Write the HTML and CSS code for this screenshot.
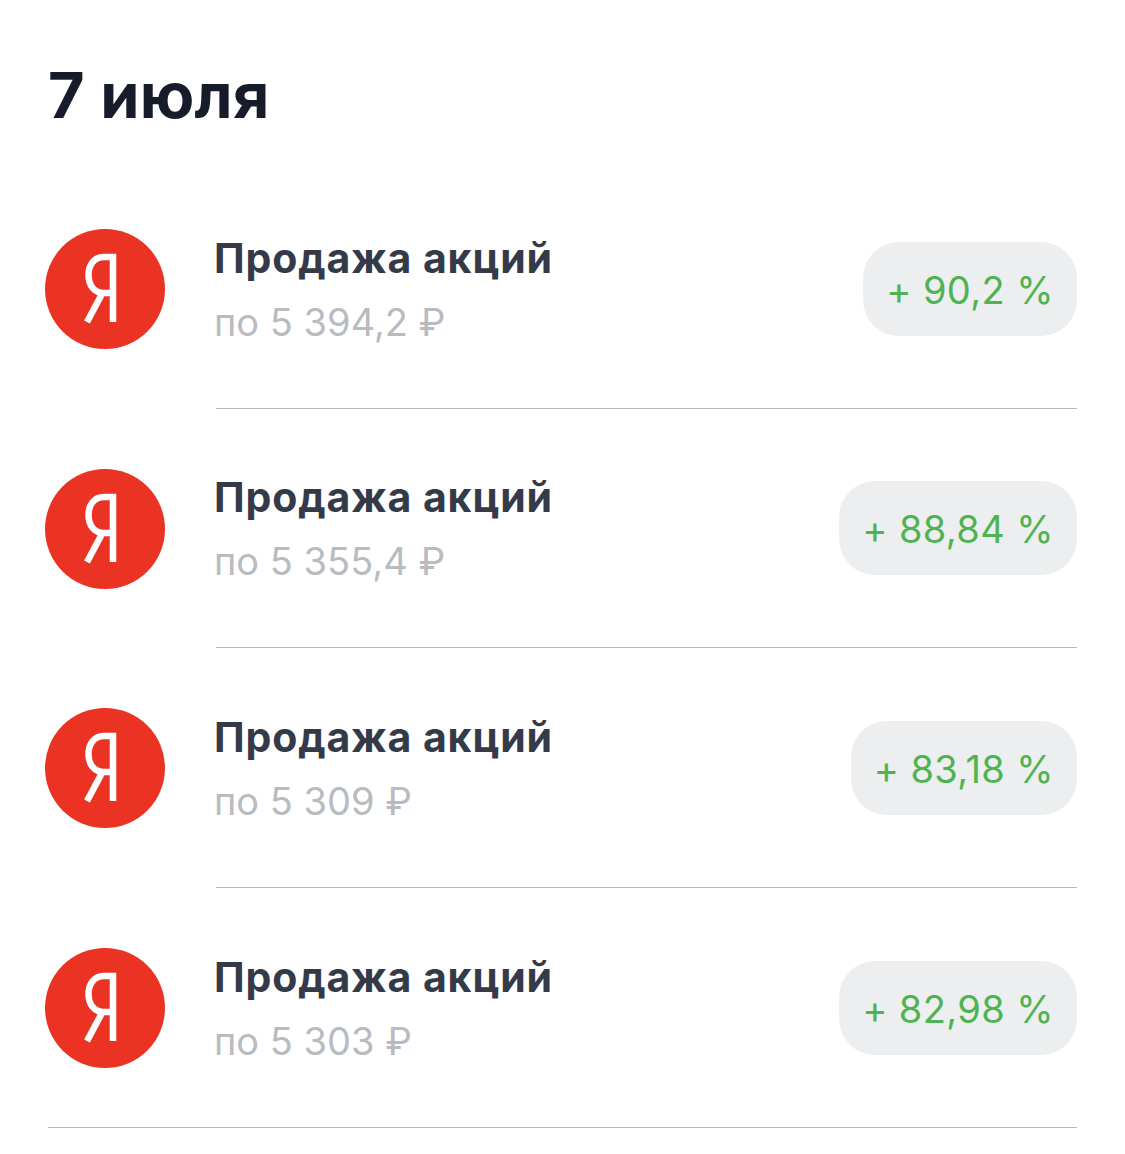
FILE: index.html
```html
<!DOCTYPE html>
<html lang="ru">
<head>
    <meta charset="UTF-8">
    <meta name="viewport" content="width=device-width, initial-scale=1.0">
    <title>7 июля</title>
    <link rel="stylesheet" href="styles.css">
</head>
<body>
    <div class="main-content">
        <h1 class="day-title">7 июля</h1>

        <div class="deals">
            <div class="deal">
                <svg class="logo" viewBox="0 0 120 120" role="img" aria-label="Яндекс">
                    <circle cx="60" cy="60" r="60" fill="#ea3323"/>
                    <path d="M68 93V28H59C49 28 43.5 36 43.5 46C43.5 56 49 64 59 64H68M58 63L42 93" fill="none" stroke="#fff" stroke-width="6.5"/>
                </svg>
                <div class="deal-body">
                    <div class="deal-text">
                        <div class="deal-name">Продажа акций</div>
                        <div class="deal-price">по 5 394,2 ₽</div>
                    </div>
                    <div class="badge">+ 90,2 %</div>
                </div>
            </div>

            <div class="deal">
                <svg class="logo" viewBox="0 0 120 120" role="img" aria-label="Яндекс">
                    <circle cx="60" cy="60" r="60" fill="#ea3323"/>
                    <path d="M68 93V28H59C49 28 43.5 36 43.5 46C43.5 56 49 64 59 64H68M58 63L42 93" fill="none" stroke="#fff" stroke-width="6.5"/>
                </svg>
                <div class="deal-body">
                    <div class="deal-text">
                        <div class="deal-name">Продажа акций</div>
                        <div class="deal-price">по 5 355,4 ₽</div>
                    </div>
                    <div class="badge">+ 88,84 %</div>
                </div>
            </div>

            <div class="deal">
                <svg class="logo" viewBox="0 0 120 120" role="img" aria-label="Яндекс">
                    <circle cx="60" cy="60" r="60" fill="#ea3323"/>
                    <path d="M68 93V28H59C49 28 43.5 36 43.5 46C43.5 56 49 64 59 64H68M58 63L42 93" fill="none" stroke="#fff" stroke-width="6.5"/>
                </svg>
                <div class="deal-body">
                    <div class="deal-text">
                        <div class="deal-name">Продажа акций</div>
                        <div class="deal-price">по 5 309 ₽</div>
                    </div>
                    <div class="badge">+ 83,18 %</div>
                </div>
            </div>

            <div class="deal deal-last">
                <svg class="logo" viewBox="0 0 120 120" role="img" aria-label="Яндекс">
                    <circle cx="60" cy="60" r="60" fill="#ea3323"/>
                    <path d="M68 93V28H59C49 28 43.5 36 43.5 46C43.5 56 49 64 59 64H68M58 63L42 93" fill="none" stroke="#fff" stroke-width="6.5"/>
                </svg>
                <div class="deal-body">
                    <div class="deal-text">
                        <div class="deal-name">Продажа акций</div>
                        <div class="deal-price">по 5 303 ₽</div>
                    </div>
                    <div class="badge">+ 82,98 %</div>
                </div>
            </div>
        </div>
    </div>
</body>
</html>
```

FILE: styles.css
```css
body {
    font-family: 'Inter', 'Noto Sans', sans-serif;
    margin: 0;
    padding: 0;
    background: #fff;
}

.main-content {
    padding: 59px 48px 0 45px;
}

.day-title {
    margin: 0 0 0 3px;
    height: 110px;
    font-size: 63px;
    line-height: 72px;
    font-weight: 700;
    letter-spacing: 0.3px;
    color: #171c2b;
}

.deal {
    display: flex;
    height: 239.67px;
    box-sizing: border-box;
}

.logo {
    flex: none;
    width: 120px;
    height: 120px;
    margin-top: 60px;
    margin-right: 51px;
}

.deal-body {
    flex-grow: 1;
    display: flex;
    justify-content: space-between;
    align-items: center;
    border-bottom: 1px solid #b9b9bb;
    padding-top: 1px;
}

.deal-last {
    border-bottom: 1px solid #b9b9bb;
    margin-left: 3px;
}

.deal-last .logo {
    margin-left: -3px;
}

.deal-last .deal-body {
    border-bottom: none;
}

.deal-text {
    margin-left: -2px;
    padding-top: 2px;
}

.deal-name {
    font-size: 41px;
    line-height: 48px;
    font-weight: 650;
    letter-spacing: 0.9px;
    color: #353a48;
    margin-bottom: 16px;
}

.deal-price {
    font-size: 38px;
    line-height: 48px;
    color: #b8bbc0;
}

.badge {
    padding: 0 23px;
    height: 94px;
    line-height: 96px;
    border-radius: 36px;
    background: #eceef0;
    color: #4eb350;
    font-size: 38px;
    letter-spacing: 0.4px;
}
```
